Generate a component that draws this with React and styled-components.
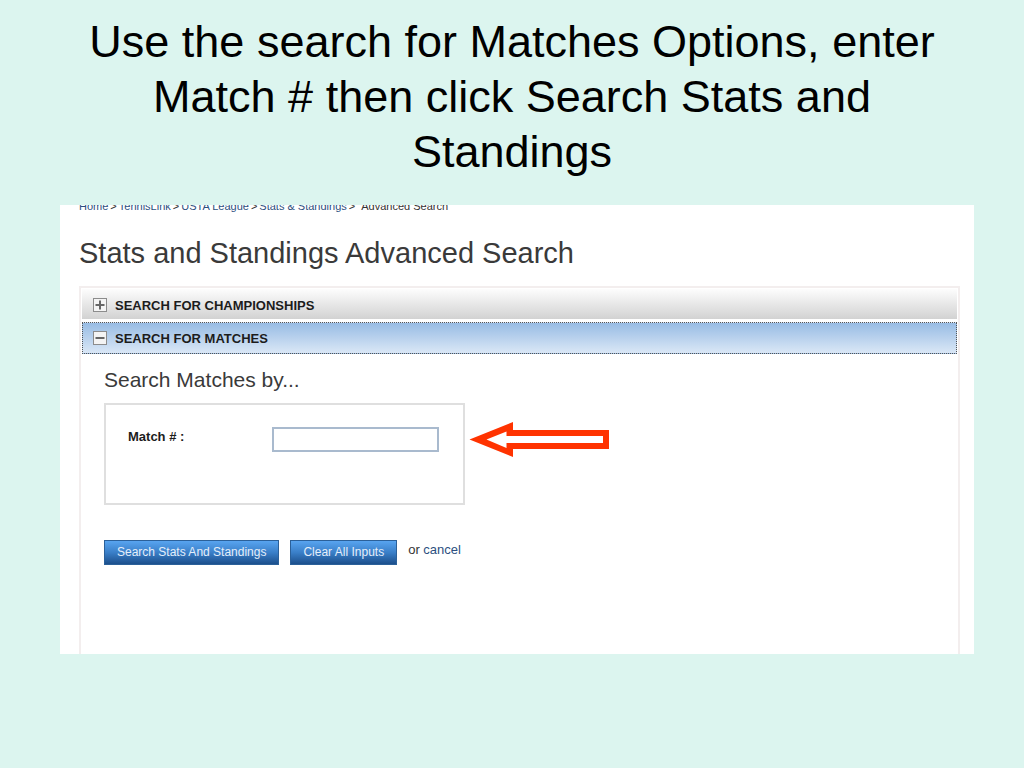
import React, { useState } from "react";
import styled, { createGlobalStyle } from "styled-components";

const crumbs = ["Home", "TennisLink", "USTA League", "Stats & Standings"];

const ToggleIcon = ({ open }) => (
  <svg width="14" height="14" viewBox="0 0 14 14" aria-hidden="true">
    <rect x="0.5" y="0.5" width="13" height="13" fill="#f4f4f4" stroke="#8c8c8c" />
    <rect x="2.5" y="6" width="9" height="2" fill="#666666" />
    {!open && <rect x="6" y="2.5" width="2" height="9" fill="#666666" />}
  </svg>
);

const Arrow = () => (
  <svg width="140" height="36" viewBox="0 0 140 36" aria-hidden="true">
    <path
      fill="#ff3300"
      fillRule="evenodd"
      d="M0.5 17.5 L44 0 V8 H140 V27 H44 V35 Z M17.5 17.5 L37.5 26 V21 H134 V14 H37.5 V9.5 Z"
    />
  </svg>
);

const App = () => {
  const [matchNumber, setMatchNumber] = useState("");
  const [section, setSection] = useState("matches");

  const handleSubmit = (e) => {
    e.preventDefault();
  };

  return (
    <>
      <GlobalStyle />
      <Slide>
        <SlideTitle>
          Use the search for Matches Options, enter Match # then click Search
          Stats and Standings
        </SlideTitle>
        <Panel>
          <Breadcrumbs aria-label="Breadcrumb">
            {crumbs.map((crumb) => (
              <React.Fragment key={crumb}>
                <TextLink href="#">{crumb}</TextLink>
                <span>&gt;</span>
              </React.Fragment>
            ))}
            <Current>Advanced Search</Current>
          </Breadcrumbs>
          <PageTitle>Stats and Standings Advanced Search</PageTitle>
          <Accordion>
            <SectionHeader
              type="button"
              aria-expanded={section === "championships"}
              onClick={() => setSection("championships")}
            >
              <ToggleIcon open={section === "championships"} />
              SEARCH FOR CHAMPIONSHIPS
            </SectionHeader>
            <SectionHeader
              type="button"
              $active
              aria-expanded={section === "matches"}
              onClick={() => setSection("matches")}
            >
              <ToggleIcon open={section === "matches"} />
              SEARCH FOR MATCHES
            </SectionHeader>
            <Form onSubmit={handleSubmit}>
              <FormTitle>Search Matches by...</FormTitle>
              <FieldRow>
                <FieldBox>
                  <Label htmlFor="match-number">Match # :</Label>
                  <Input
                    id="match-number"
                    type="text"
                    value={matchNumber}
                    onChange={(e) => setMatchNumber(e.target.value)}
                  />
                </FieldBox>
                <Arrow />
              </FieldRow>
              <Actions>
                <BlueButton type="submit">Search Stats And Standings</BlueButton>
                <BlueButton type="button" onClick={() => setMatchNumber("")}>
                  Clear All Inputs
                </BlueButton>
                <CancelText>
                  or <TextLink href="#">cancel</TextLink>
                </CancelText>
              </Actions>
            </Form>
          </Accordion>
        </Panel>
      </Slide>
    </>
  );
};

const GlobalStyle = createGlobalStyle`
  * {
    box-sizing: border-box;
  }
  body {
    margin: 0;
    background: #dcf5ef;
    font-family: "Liberation Sans", Arial, sans-serif;
  }
`;

const Slide = styled.main`
  min-height: 100vh;
  padding: 14px 50px 40px 60px;
  background: #dcf5ef;
`;

const SlideTitle = styled.h1`
  margin: 0 10px 26px 0;
  font-size: 45px;
  font-weight: 400;
  line-height: 55px;
  text-align: center;
  color: #000000;
`;

const Panel = styled.section`
  padding: 0 14px 0 19px;
  background: #ffffff;
  overflow: hidden;
`;

/* the top of this line is cut off by the panel edge */
const Breadcrumbs = styled.nav`
  display: flex;
  gap: 2px;
  margin-top: -5px;
  font-size: 11px;
  line-height: 12px;
  color: #333333;
`;

const TextLink = styled.a`
  color: #2b4f80;
  text-decoration: none;
`;

const Current = styled.span`
  margin-left: 4px;
`;

const PageTitle = styled.h2`
  margin: 25px 0 17px;
  font-size: 29px;
  font-weight: 400;
  line-height: 32px;
  color: #3a3a3a;
`;

const Accordion = styled.div`
  display: flex;
  flex-direction: column;
  gap: 3px;
  padding: 1px 1px 0;
  border: 2px solid #f3eeee;
  border-bottom: 0;
`;

const SectionHeader = styled.button`
  display: flex;
  align-items: center;
  gap: 8px;
  width: 100%;
  height: ${({ $active }) => ($active ? "32px" : "30px")};
  padding: ${({ $active }) => ($active ? "0 10px" : "2px 10px 0")};
  border: 1px ${({ $active }) => ($active ? "dotted #555555" : "solid transparent")};
  background: ${({ $active }) =>
    $active
      ? "linear-gradient(#98bce4, #dae7f6)"
      : "linear-gradient(#fdfdfd, #d2d2d2) border-box"};
  font-family: inherit;
  font-size: 13px;
  font-weight: 700;
  color: #1c1c1c;
  text-align: left;
`;

const Form = styled.form`
  padding: 11px 22px 89px;
`;

const FormTitle = styled.h3`
  margin: 0 0 11px;
  font-size: 21px;
  font-weight: 400;
  line-height: 24px;
  color: #3a3a3a;
`;

const FieldRow = styled.div`
  display: flex;
  align-items: flex-start;
  gap: 4px;

  svg {
    margin-top: 19px;
  }
`;

const FieldBox = styled.div`
  display: flex;
  align-items: flex-start;
  justify-content: space-between;
  width: 361px;
  height: 102px;
  padding: 22px 24px 22px 22px;
  border: 2px solid #dfdfdf;
`;

const Label = styled.label`
  font-size: 13px;
  font-weight: 700;
  line-height: 20px;
  color: #1c1c1c;
`;

const Input = styled.input`
  width: 167px;
  height: 25px;
  padding: 2px 4px;
  border: 2px solid #a9bace;
  background: #ffffff;
  font-family: inherit;
  font-size: 12px;
`;

const Actions = styled.div`
  display: flex;
  align-items: center;
  gap: 11px;
  margin-top: 35px;
`;

const BlueButton = styled.button`
  height: 25px;
  padding: 0 12px 2px;
  border: 1px solid #2b6099;
  background: linear-gradient(#58a4f0, #3a7fc8 50%, #1c4f8c);
  font-family: inherit;
  font-size: 12px;
  color: #e4eefa;
  white-space: nowrap;
`;

const CancelText = styled.span`
  padding-bottom: 6px;
  font-size: 13px;
  line-height: 16px;
  color: #333333;
`;

export default App;
